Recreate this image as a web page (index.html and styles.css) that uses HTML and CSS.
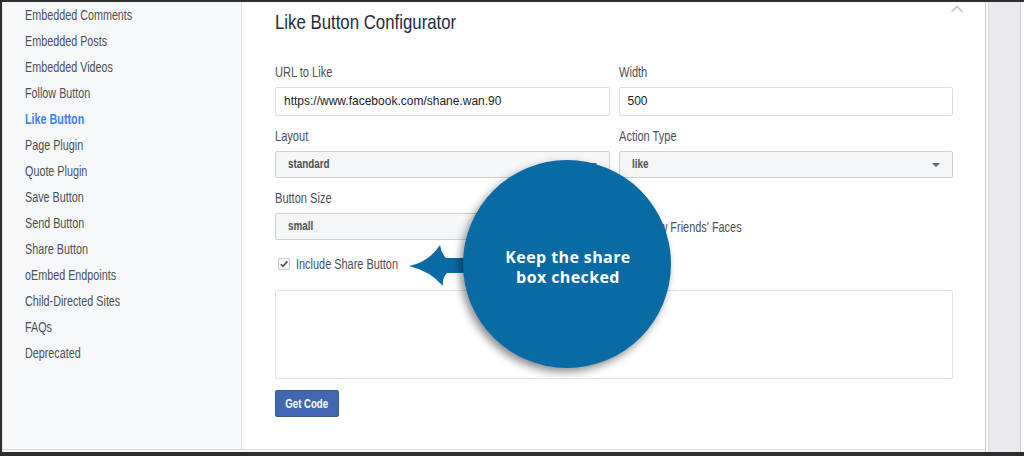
FILE: index.html
```html
<!DOCTYPE html>
<html lang="en">
<head>
    <meta charset="UTF-8">
    <title>Like Button Configurator</title>
    <link rel="stylesheet" href="styles.css">
</head>
<body>
    <div class="frame">
        <aside class="sidebar">
            <ul class="nav">
                <li class="nav-item">Embedded Comments</li>
                <li class="nav-item">Embedded Posts</li>
                <li class="nav-item">Embedded Videos</li>
                <li class="nav-item">Follow Button</li>
                <li class="nav-item active">Like Button</li>
                <li class="nav-item">Page Plugin</li>
                <li class="nav-item">Quote Plugin</li>
                <li class="nav-item">Save Button</li>
                <li class="nav-item">Send Button</li>
                <li class="nav-item">Share Button</li>
                <li class="nav-item">oEmbed Endpoints</li>
                <li class="nav-item">Child-Directed Sites</li>
                <li class="nav-item">FAQs</li>
                <li class="nav-item">Deprecated</li>
            </ul>
        </aside>

        <main class="panel">
            <div class="panel-head">
                <h1 class="title">Like Button Configurator</h1>
                <svg class="collapse" width="14" height="8" viewBox="0 0 14 8">
                    <polyline points="1.5,7 7,1.5 12.5,7" fill="none" stroke="#c4c6ca" stroke-width="1.6"/>
                </svg>
            </div>

            <div class="config">
                <div class="row">
                    <div class="field">
                        <label class="label">URL to Like</label>
                        <div class="input">https://www.facebook.com/shane.wan.90</div>
                    </div>
                    <div class="field">
                        <label class="label">Width</label>
                        <div class="input">500</div>
                    </div>
                </div>

                <div class="row">
                    <div class="field">
                        <label class="label">Layout</label>
                        <div class="select"><span class="select-text">standard</span><span class="caret"></span></div>
                    </div>
                    <div class="field">
                        <label class="label">Action Type</label>
                        <div class="select"><span class="select-text">like</span><span class="caret"></span></div>
                    </div>
                </div>

                <div class="row">
                    <div class="field">
                        <label class="label">Button Size</label>
                        <div class="select"><span class="select-text">small</span><span class="caret"></span></div>
                    </div>
                    <div class="field field-bottom">
                        <div class="check-row">
                            <span class="checkbox"></span>
                            <span class="check-text">Show Friends' Faces</span>
                        </div>
                    </div>
                </div>

                <div class="check-row share-row">
                    <span class="checkbox">
                        <svg width="10" height="10" viewBox="0 0 10 10">
                            <polyline points="1.8,5.2 4,7.4 8.4,2.4" fill="none" stroke="#4b4f56" stroke-width="1.6"/>
                        </svg>
                    </span>
                    <span class="check-text">Include Share Button</span>
                </div>

                <div class="code-box"></div>

                <button class="get-code"><span class="get-code-text">Get Code</span></button>
            </div>

            <!-- callout drawn over the form -->
            <svg class="callout-arrow" width="70" height="52" viewBox="0 0 70 52">
                <path d="M4 28 Q24 24 35 7 Q36 15 41 20 L70 20 L70 35 L42 35 Q37 40 38 48 Q25 33 4 28 Z" fill="#0a6aa6"/>
            </svg>
            <div class="callout">
                <p class="callout-text">Keep the share<br>box checked</p>
            </div>
        </main>

        <div class="scroll">
            <div class="scroll-track"></div>
        </div>
    </div>
</body>
</html>
```

FILE: styles.css
```css
html, body {
    margin: 0;
    padding: 0;
}

body {
    font-family: 'Liberation Sans', Arial, sans-serif;
    background-color: #fff;
    color: #4b4f56;
}

.frame {
    display: flex;
    width: 1024px;
    height: 456px;
    box-sizing: border-box;
    border-top: 2px solid #2e2e2e;
    border-left: 2px solid #2e2e2e;
    border-bottom: 4px solid #2e2e2e;
    background-color: #f6f6f6;
}

.nav-item,
.label,
.check-text,
.title {
    transform: scaleX(0.77);
    transform-origin: left center;
}

.sidebar {
    width: 240px;
    height: 448px;
    box-sizing: border-box;
    background-color: #f7f8fa;
    border-left: 1px solid #e4e4e4;
    border-right: 1px solid #e3e4e8;
    border-bottom: 1px solid #dcdcdc;
}

.nav {
    list-style: none;
    margin: 0;
    padding: 0 0 0 22px;
}

.nav-item {
    font-size: 14px;
    line-height: 26px;
    color: #4b4f56;
}

.nav-item.active {
    color: #4080ff;
    font-weight: bold;
}

.panel {
    position: relative;
    width: 743px;
    height: 448px;
    box-sizing: border-box;
    padding: 8px 32px 0 33px;
    background-color: #fff;
    border-bottom: 1px solid #dcdcdc;
}

.panel-head {
    display: flex;
    justify-content: space-between;
    align-items: flex-start;
}

.title {
    margin: 0;
    font-size: 21px;
    line-height: 24px;
    font-weight: normal;
    color: #1d2b44;
    transform: scaleX(0.8);
}

.collapse {
    margin: -5px -11px 0 0;
}

.config {
    margin-top: 30px;
}

.row {
    display: grid;
    grid-template-columns: 1fr 1fr;
    column-gap: 9px;
    margin-bottom: 12px;
}

.field {
    display: flex;
    flex-direction: column;
}

.field-bottom {
    justify-content: flex-end;
    height: 50px;
}

.label {
    font-size: 14px;
    line-height: 16px;
    margin-bottom: 7px;
    color: #4b4f56;
    transform: scaleX(0.79);
}

.input {
    height: 29px;
    box-sizing: border-box;
    border: 1px solid #dddfe2;
    border-radius: 2px;
    padding: 0 8px;
    font-size: 12px;
    line-height: 27px;
    color: #1d2129;
}

.select {
    position: relative;
    height: 27px;
    box-sizing: border-box;
    border: 1px solid #ccd0d5;
    border-radius: 2px;
    padding: 0 12px;
    background-color: #f5f6f7;
    font-size: 12px;
    font-weight: bold;
    line-height: 25px;
    color: #4b4f56;
}

.select-text {
    display: inline-block;
    transform: scaleX(0.82);
    transform-origin: left center;
}

.caret {
    position: absolute;
    right: 12px;
    top: 11px;
    width: 0;
    height: 0;
    border-left: 4px solid transparent;
    border-right: 4px solid transparent;
    border-top: 4px solid #606770;
}

.check-row {
    display: flex;
    align-items: center;
    height: 27px;
    padding-left: 3px;
}

.share-row {
    height: 16px;
    margin-top: 16px;
}

.checkbox {
    display: flex;
    flex-shrink: 0;
    align-items: center;
    justify-content: center;
    width: 12px;
    height: 12px;
    box-sizing: border-box;
    border: 1px solid #ccd0d5;
    border-radius: 2px;
    background-color: #f5f6f7;
    margin-right: 6px;
}

.check-text {
    font-size: 14px;
    line-height: 16px;
    color: #4b4f56;
    transform: scaleX(0.78);
}

.code-box {
    height: 89px;
    box-sizing: border-box;
    margin-top: 18px;
    border: 1px solid #e2e3e7;
    border-radius: 2px;
}

.get-code {
    display: block;
    width: 64px;
    height: 27px;
    margin-top: 11px;
    padding: 0;
    border: 1px solid #365899;
    border-radius: 2px;
    background-color: #4267b2;
    color: #fff;
    font-family: 'Liberation Sans', Arial, sans-serif;
    font-size: 12px;
    font-weight: bold;
}

.get-code-text {
    display: inline-block;
    transform: scaleX(0.8);
}

.callout-arrow {
    position: absolute;
    left: 163px;
    top: 236px;
}

.callout {
    position: absolute;
    left: 221px;
    top: 158px;
    width: 208px;
    height: 208px;
    border-radius: 50%;
    background-color: #0a6aa6;
    box-shadow: -3px 4px 9px rgba(0, 0, 0, 0.45);
    display: flex;
    align-items: center;
    justify-content: center;
}

.callout-text {
    margin: 0 0 0 2px;
    padding-top: 6px;
    font-family: 'Open Sans', sans-serif;
    font-weight: bold;
    font-size: 16px;
    line-height: 20px;
    letter-spacing: 0.4px;
    text-align: center;
    color: #fff;
}

.scroll {
    width: 39px;
    height: 450px;
    box-sizing: border-box;
    border-left: 1px solid #c9c9cd;
    padding: 0 3px 0 2px;
    background-color: #fbfbfb;
}

.scroll-track {
    height: 100%;
    box-sizing: border-box;
    background-color: #e9e9ee;
    border-left: 1px solid #d9d9de;
    border-right: 1px solid #cfcfd3;
}
```
